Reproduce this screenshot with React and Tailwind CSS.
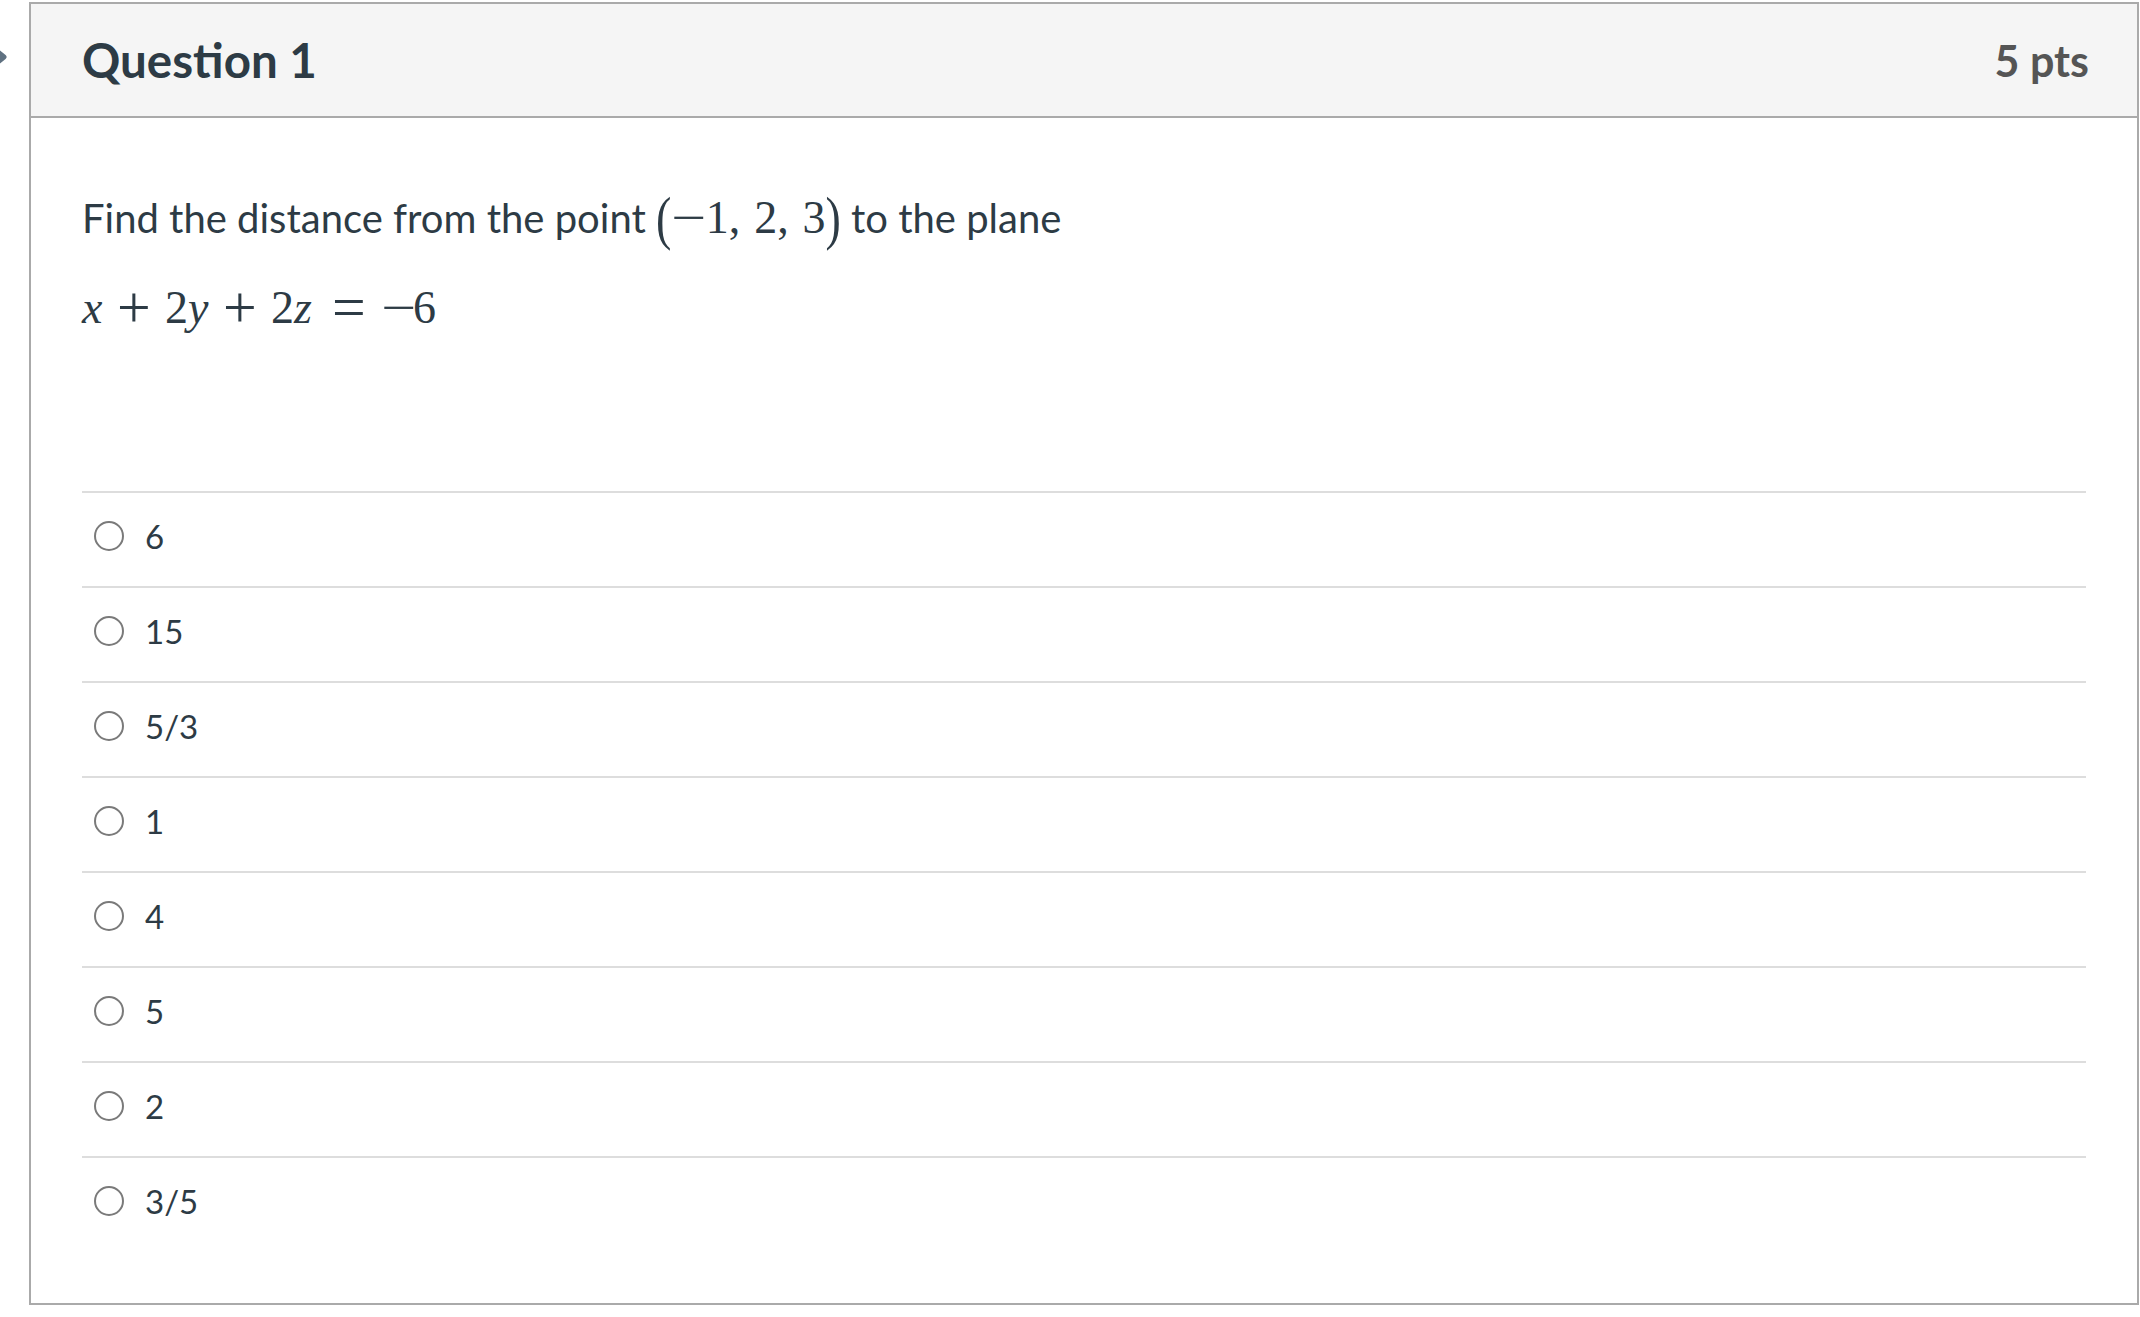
const ANSWERS = ['6', '15', '5/3', '1', '4', '5', '2', '3/5'];

function Radio() {
  return <span className="block h-[30px] w-[30px] flex-shrink-0 rounded-full border-2 border-[#7a7a7a] bg-white" />;
}

function V({ children }) {
  return <span className="italic">{children}</span>;
}

// binary operator with TeX-like spacing, glyph enlarged to CM proportions
function Op({ children, wide }) {
  return (
    <span className={`inline-block text-center ${wide ? 'w-[1.6em]' : 'w-[1.36em]'}`}>
      <span className="inline-block scale-[1.3]">{children}</span>
    </span>
  );
}

function Minus({ width }) {
  return (
    <span className={`inline-block text-center ${width}`}>
      <span className="inline-block scale-x-[1.35]">−</span>
    </span>
  );
}

function Paren({ children }) {
  return <span className="inline-block origin-center scale-y-[1.3]">{children}</span>;
}

export default function App() {
  return (
    <div className="relative min-h-[1317px] bg-white font-['Lato','Liberation_Sans',sans-serif] text-[#2d3b45]">
      {/* cut-off nav arrow at the left edge */}
      <svg className="absolute left-[-16px] top-[44px]" width="26" height="26" viewBox="0 0 26 26">
        <path d="M9 4 L20 13 L9 22" fill="none" stroke="#5f7181" strokeWidth="5" strokeLinecap="round" strokeLinejoin="round" />
      </svg>

      <div className="ml-[29px] w-[2110px] pt-[2px]">
        <div className="border-2 border-[#aaaaaa]">
          <div className="flex h-[114px] items-center justify-between border-b-2 border-[#aaaaaa] bg-[#f5f5f5] pl-[51px] pr-[48px]">
            <h2 className="text-[47.5px] font-bold leading-none">Question 1</h2>
            <span className="text-[43px] font-bold leading-none text-[#555555]">5 pts</span>
          </div>

          <div className="px-[51px] pb-[52px] pt-[71px]">
            <p className="text-[40px] leading-[58px]">
              Find the distance from the point{' '}
              <span className="font-['Liberation_Serif',serif] text-[46px]">
                <Paren>(</Paren>
                <Minus width="w-[0.75em]" />1,<span className="inline-block w-[0.3em]" />2,
                <span className="inline-block w-[0.3em]" />3<Paren>)</Paren>
              </span>{' '}
              to the plane
            </p>
            <p className="mt-[32px] font-['Liberation_Serif',serif] text-[46px] leading-[58px]">
              <V>x</V>
              <Op>+</Op>2<V>y</V>
              <Op>+</Op>2<V>z</V>
              <Op wide>=</Op>
              <Minus width="w-[0.6em]" />6
            </p>

            <div className="mt-[154px]">
              {ANSWERS.map((answer) => (
                <div key={answer} className="flex h-[95px] items-center gap-[21px] border-t-2 border-[#dddddd] pb-[7px] pl-[12px]">
                  <Radio />
                  <span className="text-[33px] leading-none">{answer}</span>
                </div>
              ))}
            </div>
          </div>
        </div>
      </div>
    </div>
  );
}
